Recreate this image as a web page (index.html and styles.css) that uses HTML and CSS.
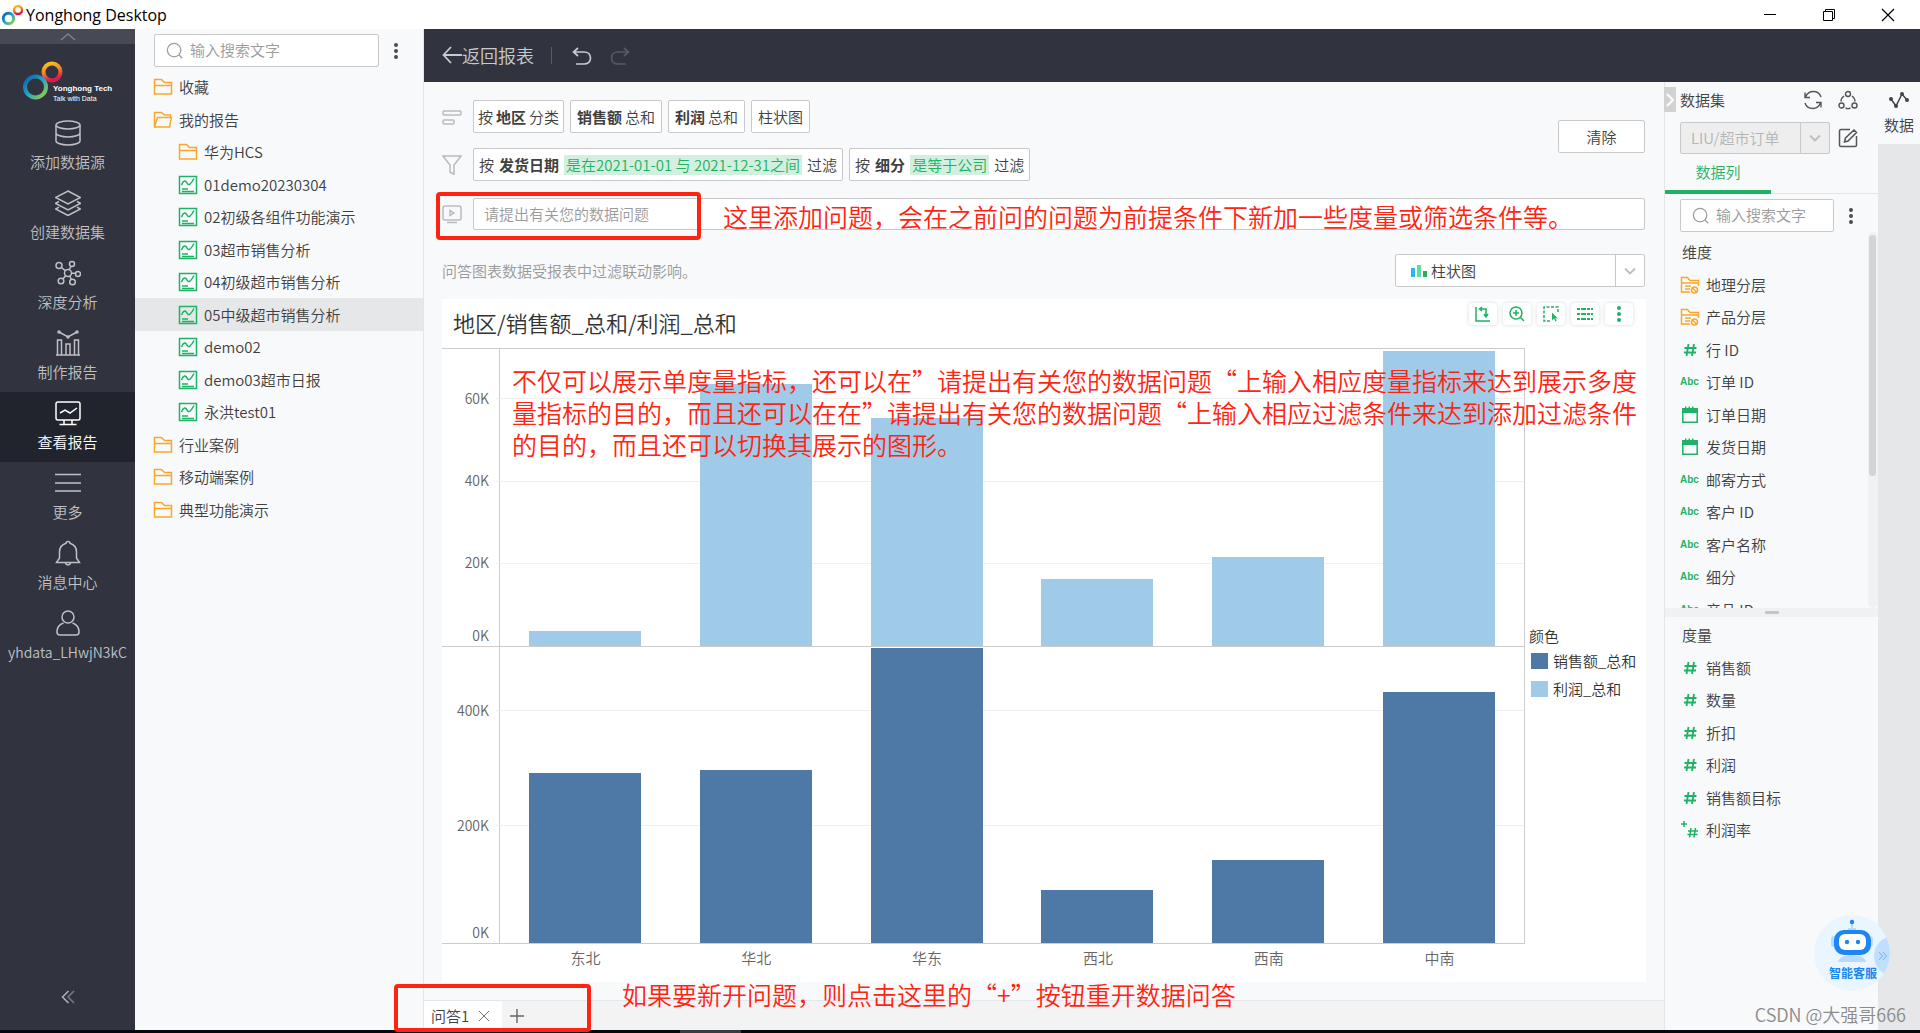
FILE: index.html
```html
<!DOCTYPE html>
<html lang="zh-CN">
<head>
<meta charset="utf-8">
<title>Yonghong Desktop</title>
<link rel="stylesheet" href="styles.css">
</head>
<body>
<svg class="defs" width="0" height="0" aria-hidden="true">
  <defs>
    <linearGradient id="ring-blue" x1="0" y1="0" x2="1" y2="1"><stop offset="0" stop-color="#0b5fae"/><stop offset=".5" stop-color="#23a6c8"/><stop offset="1" stop-color="#a5ce3a"/></linearGradient>
    <linearGradient id="ring-warm" x1="0" y1="0" x2="0.3" y2="1"><stop offset="0" stop-color="#f8c51c"/><stop offset=".5" stop-color="#f18a2a"/><stop offset="1" stop-color="#e3174d"/></linearGradient>
  </defs>
  <symbol id="folder" viewBox="0 0 20 18"><path d="M1.500 16V1.500h7l3 3h7V16z M1.500 7.500h17" fill="none" stroke="#f9a72b" stroke-width="1.500"/></symbol>
  <symbol id="folder-open" viewBox="0 0 20 18"><path d="M1.500 16V1.500h7l3 2.500h6v2.500 M1.500 16l3-9.500h14l-2 9.500z" fill="none" stroke="#f9a72b" stroke-width="1.500"/></symbol>
  <symbol id="report" viewBox="0 0 20 20"><g fill="none" stroke="#1fb264" stroke-width="1.500"><path d="M1.500 1.500h17v17h-17z M4 14h6 M4 16.500h12"/><path d="M3.500 10c2-5 4-5 5.500-2 1.500 3.500 4 1 7-4.500"/></g></symbol>
  <symbol id="search" viewBox="0 0 20 20"><g fill="none" stroke="#9c9c9c" stroke-width="1.400"><circle cx="9" cy="9" r="7.500"/><path d="M14.500 14.500l3.500 3.500"/></g></symbol>
  <symbol id="dots" viewBox="0 0 6 18"><g fill="#4d4d4d"><circle cx="3" cy="3" r="2"/><circle cx="3" cy="9" r="2"/><circle cx="3" cy="15" r="2"/></g></symbol>
  <symbol id="hash" viewBox="0 0 20 20"><path d="M8.500 4L6.500 16 M14 4l-2 12 M4.500 8h12 M4 12.500h12" fill="none" stroke="#1fb264" stroke-width="1.800"/></symbol>
  <symbol id="plus-hash" viewBox="0 0 20 20"><path d="M11 8l-1.500 9.500 M15.500 8l-1.500 9.500 M8 11h10 M7.500 14.500h10 M1 4h6 M4 1v6" fill="none" stroke="#1fb264" stroke-width="1.500"/></symbol>
  <symbol id="calendar" viewBox="0 0 20 20"><path d="M2.800 7v10.200h14.400V7z" fill="none" stroke="#1fb264" stroke-width="1.500"/><path d="M2 3h3V1.500h1.500V3h2V1.500H10V3h2V1.500h1.500V3H18v5H2z" fill="#1fb264"/></symbol>
  <symbol id="level" viewBox="0 0 20 20"><g fill="none" stroke="#f9a72b" stroke-width="1.500"><path d="M10 17H1.500V2.500h6l2.500 3h8.500V11 M1.500 8h17 M5 11h6 M5 14h5"/><circle cx="14.500" cy="15" r="3"/><path d="M12.500 13l4 4"/></g></symbol>
  <symbol id="chevron" viewBox="0 0 12 8"><path d="M1 1.500l5 5 5-5" fill="none" stroke="#bdbdbd" stroke-width="1.800"/></symbol>
</svg>

<header class="titlebar">
  <svg width="22" height="22" viewBox="0 0 22 22"><circle cx="7.500" cy="14.500" r="5.200" fill="none" stroke="url(#ring-blue)" stroke-width="3"/><circle cx="17" cy="6" r="4" fill="none" stroke="url(#ring-warm)" stroke-width="2.400"/></svg>
  <h1 class="app-name">Yonghong Desktop</h1>
  <div class="window-buttons">
    <button aria-label="最小化"><svg width="14" height="14"><path d="M1 6.500h12" stroke="#000"/></svg></button>
    <button aria-label="还原"><svg width="14" height="14" fill="none" stroke="#000"><path d="M1.500 3.500h9v9h-9z M3.500 3V1.500h9v9H11"/></svg></button>
    <button aria-label="关闭"><svg width="14" height="14"><path d="M1 1l12 12M13 1L1 13" stroke="#000" stroke-width="1.200"/></svg></button>
  </div>
</header>

<div class="app">
  <nav class="rail">
    <button class="rail-up" aria-label="向上"><svg width="16" height="8"><path d="M1 7l7-6 7 6" fill="none" stroke="#80828b" stroke-width="1.500"/></svg></button>
    <div class="logo">
      <svg width="42" height="42" viewBox="0 0 42 42"><circle cx="29" cy="11" r="8.500" fill="none" stroke="url(#ring-warm)" stroke-width="4"/><circle cx="12.500" cy="26" r="10.500" fill="none" stroke="url(#ring-blue)" stroke-width="4"/></svg>
      <p class="logo-text"><b>Yonghong Tech</b><span>Talk with Data</span></p>
    </div>
    <a class="rail-item" href="#"><svg class="ri" viewBox="0 0 26 26"><ellipse cx="13" cy="5" rx="12" ry="4"/><path d="M1 5v16c0 2.200 5.400 4 12 4s12-1.800 12-4V5 M1 13c0 2.200 5.400 4 12 4s12-1.800 12-4"/></svg><span>添加数据源</span></a>
    <a class="rail-item" href="#"><svg class="ri" viewBox="0 0 26 26"><path d="M13 1l12.500 6.500L13 14 .5 7.500z M4 11.500L.5 13.300 13 20l12.500-6.700-3.500-1.800 M4 17.200L.5 19 13 25.500 25.500 19 22 17.200"/></svg><span>创建数据集</span></a>
    <a class="rail-item" href="#"><svg class="ri" viewBox="0 0 26 26"><circle cx="13" cy="13" r="3.500"/><circle cx="4" cy="5.500" r="3"/><circle cx="17" cy="4" r="2.500"/><circle cx="23" cy="14" r="2.500"/><circle cx="6" cy="21" r="2.800"/><circle cx="17.500" cy="22" r="2.800"/><path d="M6.300 7.500l4 3.200 M16 6.500l-1.700 3 M16.500 13.300h4 M8 19l2.500-3.200 M16.300 19.500l-1.500-3.500"/></svg><span>深度分析</span></a>
    <a class="rail-item" href="#"><svg class="ri" viewBox="0 0 26 26"><path d="M1 25h24 M2.500 25V10h4v15 M11 25V14h4v11 M19.500 25V10h4v15 M4 2l9 5 9-5"/><circle cx="4" cy="2" r="1"/><circle cx="13" cy="7" r="1"/><circle cx="22" cy="2" r="1"/></svg><span>制作报告</span></a>
    <a class="rail-item active" href="#"><svg class="ri" viewBox="0 0 26 26"><rect x="1" y="2" width="24" height="18" rx="2"/><path d="M5 13l5-3 5 3 7-5 M9 20v4 M17 20v4 M4.500 24.500h17"/></svg><span>查看报告</span></a>
    <a class="rail-item" href="#"><svg class="ri" viewBox="0 0 26 26"><path d="M0 4.500h26 M0 13h26 M0 21h26"/></svg><span>更多</span></a>
    <a class="rail-item" href="#"><svg class="ri" viewBox="0 0 26 26"><path d="M13 1.500c-1.500 0-2 .8-2 1.800C7 4.500 4.500 8 4.500 12v6L1.500 22.500h23L21.500 18v-6c0-4-2.500-7.500-6.500-8.700 0-1-.5-1.800-2-1.800z M10.500 23c.5 2.500 4.500 2.500 5 0"/></svg><span>消息中心</span></a>
    <a class="rail-item user" href="#"><svg class="ri" viewBox="0 0 26 26"><circle cx="13" cy="7" r="6"/><path d="M8.500 13C4 14.500 2 18 2 22c0 2 1 3 3 3h16c2 0 3-1 3-3 0-4-2-7.500-6.500-9"/></svg><span>yhdata_LHwjN3kC</span></a>
    <button class="rail-fold" aria-label="收起"><svg width="14" height="14" fill="none" stroke-width="1.500"><path d="M7.500 1L1.500 7l6 6" stroke="#b4b5ba"/><path d="M13 1L7 7l6 6" stroke="#777a84"/></svg></button>
  </nav>

  <aside class="tree">
    <div class="search-line">
      <label class="search"><svg width="18" height="18"><use href="#search"/></svg><input type="text" placeholder="输入搜索文字" aria-label="搜索报告"></label>
      <button class="more" aria-label="更多选项"><svg width="6" height="18"><use href="#dots"/></svg></button>
    </div>
    <ul class="tree-list">
      <li><svg width="20" height="18"><use href="#folder"/></svg>收藏</li>
      <li><svg width="20" height="18"><use href="#folder-open"/></svg>我的报告</li>
      <li class="sub"><svg width="20" height="18"><use href="#folder"/></svg>华为HCS</li>
      <li class="sub"><svg width="20" height="20"><use href="#report"/></svg>01demo20230304</li>
      <li class="sub"><svg width="20" height="20"><use href="#report"/></svg>02初级各组件功能演示</li>
      <li class="sub"><svg width="20" height="20"><use href="#report"/></svg>03超市销售分析</li>
      <li class="sub"><svg width="20" height="20"><use href="#report"/></svg>04初级超市销售分析</li>
      <li class="sub selected"><svg width="20" height="20"><use href="#report"/></svg>05中级超市销售分析</li>
      <li class="sub"><svg width="20" height="20"><use href="#report"/></svg>demo02</li>
      <li class="sub"><svg width="20" height="20"><use href="#report"/></svg>demo03超市日报</li>
      <li class="sub"><svg width="20" height="20"><use href="#report"/></svg>永洪test01</li>
      <li><svg width="20" height="18"><use href="#folder"/></svg>行业案例</li>
      <li><svg width="20" height="18"><use href="#folder"/></svg>移动端案例</li>
      <li><svg width="20" height="18"><use href="#folder"/></svg>典型功能演示</li>
    </ul>
  </aside>

  <div class="workspace">
    <div class="topbar">
      <a class="back" href="#"><svg width="20" height="18" fill="none" stroke="#c9cacd" stroke-width="1.800"><path d="M9 1L1.500 9 9 17 M1.500 9H20"/></svg>返回报表</a>
      <span class="bar-sep"></span>
      <button aria-label="撤销"><svg width="20" height="18" fill="none" stroke="#c9cacd" stroke-width="1.700"><path d="M6 1L1.500 5 6 9 M1.500 5H12c4 0 6.500 2.500 6.500 6s-2.500 6-6.500 6H4"/></svg></button>
      <button aria-label="重做"><svg width="20" height="18" fill="none" stroke="#565964" stroke-width="1.700"><path d="M14 1l4.500 4L14 9 M18.500 5H8c-4 0-6.500 2.500-6.500 6s2.500 6 6.500 6h8"/></svg></button>
    </div>

    <div class="columns">
      <main class="qa">
        <div class="qa-body">
          <div class="query-head">
            <div class="query-rows">
              <div class="chip-row">
                <svg class="row-icon" width="20" height="20" fill="none" stroke="#b9bbbf" stroke-width="1.500"><rect x="1" y="4" width="18" height="4" rx="1"/><rect x="1" y="13" width="11" height="4" rx="1"/></svg>
                <button class="chip">按<b>地区</b>分类</button><button class="chip measure"><b>销售额</b>总和</button><button class="chip measure"><b>利润</b>总和</button><button class="chip measure">柱状图</button>
              </div>
              <div class="chip-row">
                <svg class="row-icon" width="20" height="20" fill="none" stroke="#b9bbbf" stroke-width="1.500"><path d="M1 1h18l-7 9v9.500L8 17v-7z"/></svg>
                <button class="chip wide">按<b>发货日期</b><mark>是在2021-01-01 与 2021-12-31之间</mark>过滤</button><button class="chip wide">按<b>细分</b><mark>是等于公司</mark>过滤</button>
              </div>
            </div>
            <button class="clear">清除</button>
          </div>
          <div class="ask-row">
            <svg class="row-icon" width="20" height="20" fill="none" stroke="#b9bbbf" stroke-width="1.500"><rect x="1" y="2" width="18" height="14" rx="2"/><path d="M8 6.500v5l4-2.500z M5 18.500h10"/></svg>
            <input class="ask" type="text" placeholder="请提出有关您的数据问题" aria-label="数据问题">
          </div>
          <div class="type-row">
            <p class="hint">问答图表数据受报表中过滤联动影响。</p>
            <label class="type-box"><svg width="16" height="12"><path fill="#25b7f0" d="M0 3h4v9H0z"/><path fill="#63dba0" d="M6 0h4v12H6z"/><path fill="#1fb264" d="M12 6h4v6h-4z"/></svg><select class="type" aria-label="图表类型"><option>柱状图</option></select><span class="drop"><svg width="12" height="8"><use href="#chevron"/></svg></span></label>
          </div>

          <section class="card">
            <div class="card-head">
              <h2 class="chart-title">地区/销售额_总和/利润_总和</h2>
              <div class="tools">
                <button aria-label="交换坐标轴"><svg width="18" height="18"><path d="M2 2v14h14 M6 4h6v7 M8 2L5.500 4 8 6 M10 9l2 3 2-3"/></svg></button>
                <button aria-label="放大"><svg width="18" height="18"><circle cx="8" cy="8" r="6"/><path d="M12.500 12.500L16 16 M8 5v6 M5 8h6"/></svg></button>
                <button aria-label="框选"><svg width="18" height="18"><path stroke-dasharray="3 1.500" d="M8 16H2V2h14v5"/><path d="M10 7.500v8l2-2 1.500 3 1.200-.6-1.400-2.700h2.400z" fill="#1fb264" stroke="none"/></svg></button>
                <button aria-label="图例"><svg width="18" height="18"><path stroke-width="2" stroke-dasharray="3 1 5 1" d="M1 4h16 M1 9h16 M1 14h16"/></svg></button>
                <button aria-label="更多"><svg width="18" height="18"><g fill="#1fb264" stroke="none"><circle cx="9" cy="3" r="2"/><circle cx="9" cy="9" r="2"/><circle cx="9" cy="15" r="2"/></g></svg></button>
              </div>
            </div>
            <div class="chart">
              <div class="plots">
                <div class="plot">
                  <div class="axis"><span style="bottom:83.400%">60K</span><span style="bottom:55.700%">40K</span><span style="bottom:28%">20K</span><span class="zero">0K</span></div>
                  <div class="area">
                    <i style="bottom:83%"></i><i style="bottom:55.300%"></i><i style="bottom:27.600%"></i>
                    <div class="cell"><div class="bar light" style="height:4.900%"></div></div>
                    <div class="cell"><div class="bar light" style="height:88.200%"></div></div>
                    <div class="cell"><div class="bar light" style="height:76.700%"></div></div>
                    <div class="cell"><div class="bar light" style="height:22.500%"></div></div>
                    <div class="cell"><div class="bar light" style="height:30%"></div></div>
                    <div class="cell"><div class="bar light" style="height:99.400%"></div></div>
                  </div>
                </div>
                <div class="plot">
                  <div class="axis"><span style="bottom:78.600%">400K</span><span style="bottom:39.700%">200K</span><span class="zero">0K</span></div>
                  <div class="area">
                    <i style="bottom:78.200%"></i><i style="bottom:39.300%"></i>
                    <div class="cell"><div class="bar" style="height:57.300%"></div></div>
                    <div class="cell"><div class="bar" style="height:58.200%"></div></div>
                    <div class="cell"><div class="bar" style="height:99.400%"></div></div>
                    <div class="cell"><div class="bar" style="height:17.800%"></div></div>
                    <div class="cell"><div class="bar" style="height:28%"></div></div>
                    <div class="cell"><div class="bar" style="height:84.700%"></div></div>
                  </div>
                </div>
                <div class="cats"><span>东北</span><span>华北</span><span>华东</span><span>西北</span><span>西南</span><span>中南</span></div>
              </div>
              <div class="legend">
                <p>颜色</p>
                <p class="key"><span class="swatch"></span>销售额_总和</p>
                <p class="key"><span class="swatch light"></span>利润_总和</p>
              </div>
            </div>
          </section>
        </div>
        <div class="tabs">
          <button class="tab">问答1<svg width="10" height="10"><path d="M0 0l10 10M10 0L0 10" stroke="#777"/></svg></button>
          <button class="tab-add" aria-label="新建问答"><svg width="14" height="14"><path d="M7 0v14M0 7h14" stroke="#666" stroke-width="1.400"/></svg></button>
        </div>
      </main>

      <aside class="data">
        <button class="collapse" aria-label="收起面板"><svg width="8" height="14"><path d="M1 1l6 6-6 6" fill="none" stroke="#fff" stroke-width="2"/></svg></button>
        <div class="data-head">
          <h2>数据集</h2>
          <button aria-label="刷新"><svg width="20" height="20" fill="none" stroke="#555" stroke-width="1.400"><path d="M2.500 7C4 3.500 7 1.500 10.300 1.500c3.500 0 6.500 2 7.700 5.500 M2 2.500V7.500h5 M17.500 13c-1.500 3.500-4.500 5.500-7.800 5.500-3.500 0-6.500-2-7.700-5.500 M18 17.500v-5h-5"/></svg></button>
          <button aria-label="关系"><svg width="20" height="20" fill="none" stroke="#555" stroke-width="1.400"><circle cx="10" cy="4" r="2.500"/><circle cx="3.500" cy="15.500" r="2.500"/><circle cx="16.500" cy="15.500" r="2.500"/><path d="M6 6C4 7.500 3 9 3 11.500 M14 6c2 1.500 3 3 3 5.500 M7.500 18c1.700.8 3.300.8 5 0"/></svg></button>
        </div>
        <div class="set-row">
          <label class="set-box"><select disabled aria-label="数据集"><option>LIU/超市订单</option></select><span class="drop"><svg width="12" height="8"><use href="#chevron"/></svg></span></label>
          <button aria-label="编辑"><svg width="20" height="20" fill="none" stroke="#555" stroke-width="1.500"><path d="M12 1.500H3c-1 0-1.500.5-1.500 1.500v14c0 1 .5 1.500 1.500 1.500h14c1 0 1.500-.5 1.500-1.500V8 M6.500 14l1-4 8.500-8 2.500 2.500-8.500 8.500z"/></svg></button>
        </div>
        <div class="data-tabs"><button>数据列</button></div>
        <div class="search-line slim">
          <label class="search"><svg width="18" height="18"><use href="#search"/></svg><input type="text" placeholder="输入搜索文字" aria-label="搜索字段"></label>
          <button class="more" aria-label="更多选项"><svg width="6" height="18"><use href="#dots"/></svg></button>
        </div>
        <div class="dims">
          <ul class="fields">
            <li class="group">维度</li>
            <li><svg width="20" height="20"><use href="#level"/></svg>地理分层</li>
            <li><svg width="20" height="20"><use href="#level"/></svg>产品分层</li>
            <li><svg width="20" height="20"><use href="#hash"/></svg>行 ID</li>
            <li><b class="abc">Abc</b>订单 ID</li>
            <li><svg width="20" height="20"><use href="#calendar"/></svg>订单日期</li>
            <li><svg width="20" height="20"><use href="#calendar"/></svg>发货日期</li>
            <li><b class="abc">Abc</b>邮寄方式</li>
            <li><b class="abc">Abc</b>客户 ID</li>
            <li><b class="abc">Abc</b>客户名称</li>
            <li><b class="abc">Abc</b>细分</li>
            <li><b class="abc">Abc</b>产品 ID</li>
          </ul>
          <div class="track"><div class="thumb"></div></div>
        </div>
        <div class="splitter"><span></span></div>
        <ul class="fields">
          <li class="group">度量</li>
          <li><svg width="20" height="20"><use href="#hash"/></svg>销售额</li>
          <li><svg width="20" height="20"><use href="#hash"/></svg>数量</li>
          <li><svg width="20" height="20"><use href="#hash"/></svg>折扣</li>
          <li><svg width="20" height="20"><use href="#hash"/></svg>利润</li>
          <li><svg width="20" height="20"><use href="#hash"/></svg>销售额目标</li>
          <li><svg width="20" height="20"><use href="#plus-hash"/></svg>利润率</li>
        </ul>
      </aside>

      <div class="strip">
        <button class="strip-tab"><svg width="20" height="18"><path d="M2 8l5 7 6-12 5 6" fill="none" stroke="#444" stroke-width="1.500"/><g fill="#444"><circle cx="2" cy="8" r="2"/><circle cx="7" cy="15" r="2"/><circle cx="13" cy="3" r="2"/><circle cx="18" cy="9" r="2"/></g></svg>数据</button>
      </div>
    </div>
  </div>
</div>
<footer class="taskbar"><span></span></footer>

<button class="robot" aria-label="智能客服">
  <svg width="76" height="76" viewBox="0 0 76 76"><defs><clipPath id="round"><circle cx="38" cy="38" r="38"/></clipPath></defs><circle cx="38" cy="38" r="38" fill="#e9f5ff"/><circle cx="80" cy="41" r="20" fill="#c0dfff" clip-path="url(#round)"/><path d="M65 37l3.500 4-3.500 4 M69 37l3.500 4-3.500 4" fill="none" stroke="#6cb2fa"/><path d="M24 47c1-4 5-7 14-7s13 3 14 7z" fill="#b9dafc"/><path d="M38 7v7 M34 14h8" stroke="#b9dafc" stroke-width="2"/><circle cx="38" cy="7" r="2.200" fill="#1c86f2"/><rect x="17" y="21" width="42" height="11" rx="3" fill="#b9dafc"/><rect x="20" y="15" width="37" height="25" rx="10" fill="#1c86f2"/><rect x="25" y="19" width="27" height="16" rx="6" fill="#fff"/><circle cx="33" cy="27" r="2.200" fill="#1c86f2"/><circle cx="44" cy="27" r="2.200" fill="#1c86f2"/></svg>
  <span>智能客服</span>
</button>
<p class="watermark">CSDN @大强哥666</p>

<div class="frame frame-ask"></div>
<div class="frame frame-tabs"></div>
<p class="note note-ask">这里添加问题，会在之前问的问题为前提条件下新加一些度量或筛选条件等。</p>
<p class="note note-chart">不仅可以展示单度量指标，还可以在”请提出有关您的数据问题“上输入相应度量指标来达到展示多度<br>量指标的目的，而且还可以在在”请提出有关您的数据问题“上输入相应过滤条件来达到添加过滤条件<br>的目的，而且还可以切换其展示的图形。</p>
<p class="note note-tabs">如果要新开问题，则点击这里的“+”按钮重开数据问答</p>
</body>
</html>
```

FILE: styles.css
```css
* { box-sizing: border-box; }
body, h1, h2, p, ul { margin: 0; padding: 0; }
ul { list-style: none; }
body {
  display: flex;
  flex-direction: column;
  min-height: 100vh;
  position: relative;
  overflow-x: hidden;
  background: #f8f9fb;
  color: #404040;
  font: 350 15px/20px "Noto Sans CJK SC", sans-serif;
}
button, input, select { font: inherit; color: inherit; }
button { border: 0; padding: 0; background: none; display: flex; align-items: center; justify-content: center; }
a { color: inherit; text-decoration: none; }
svg { flex: none; display: block; }
.defs { position: absolute; }

.titlebar { height: 29px; background: #fff; display: flex; align-items: center; color: #000; }
.titlebar > svg { margin: 0 3px 0 1px; }
.app-name { font: 400 16px/24px "Open Sans", sans-serif; }
.window-buttons { margin-left: auto; display: flex; gap: 45px; padding-right: 25px; }

.app { flex: 1; display: flex; }

.rail { width: 135px; background: #31343f; color: #bfc0c4; display: flex; flex-direction: column; }
.rail-up { height: 15px; background: #474a54; }
.logo { display: flex; height: 68px; padding: 17px 0 0 23px; color: #fff; }
.logo-text { font: 7px/10px "Liberation Sans", sans-serif; margin: 23px 0 0 -12px; white-space: nowrap; display: flex; flex-direction: column; }
.logo-text b { font-size: 8px; }
.rail-item { height: 70px; padding-top: 8px; display: flex; flex-direction: column; align-items: center; gap: 6px; white-space: nowrap; }
.rail-item.active { background: #22242d; color: #fff; }
.rail-item.user { font-size: 14px; }
.ri { width: 26px; height: 26px; fill: none; stroke: currentColor; stroke-width: 1.5; }
.rail-fold { margin: auto auto 26px; }

.tree { width: 289px; border-right: 1px solid #e3e5e9; padding-top: 5px; }
.search-line { display: flex; align-items: center; padding-left: 19px; gap: 14px; }
.search { display: flex; align-items: center; gap: 6px; width: 225px; height: 33px; padding-left: 11px; background: #fff; border: 1px solid #c9c9c9; border-radius: 2px; }
.search input { flex: 1; min-width: 0; border: 0; padding: 0 0 1px; background: none; }
input { outline: 0; }
input::placeholder { color: #9a9a9a; opacity: 1; }
.tree-list { display: grid; grid-auto-rows: 32px 33px; padding-top: 4px; }
.tree-list li { display: flex; align-items: center; gap: 6px; padding-left: 18px; }
.tree-list .sub { padding-left: 43px; }
.tree-list .selected { background: #e6e7e9; }

.workspace { flex: 1; min-width: 0; display: flex; flex-direction: column; }
.topbar { height: 53px; background: #31343f; display: flex; align-items: center; padding-left: 18px; }
.back { display: flex; align-items: center; color: #c9cacd; font-size: 18px; line-height: 24px; padding-bottom: 1px; }
.bar-sep { width: 1px; height: 17px; background: #595c66; margin: 0 20px 0 17px; }
.topbar button { margin-right: 18px; }

.columns { flex: 1; display: flex; }
.qa { flex: 1; min-width: 0; display: flex; flex-direction: column; }
.qa-body { flex: 1; padding: 18px; display: flex; flex-direction: column; }
.query-head { display: flex; align-items: flex-start; justify-content: space-between; }
.query-rows { display: grid; gap: 15px; }
.chip-row { display: flex; align-items: center; gap: 6px; }
.row-icon { margin-right: 5px; }
.chip { height: 33px; padding: 0 4px; gap: 3px; border: 1px solid #c9c9c9; border-radius: 2px; background: #fff; white-space: nowrap; }
.measure { padding: 0 6px; }
.wide { padding: 0 5px; gap: 5px; }
b { font-weight: 700; }
mark { background: #d2efdf; color: #1fb264; line-height: 20px; padding: 0 2px; }
.clear { width: 87px; height: 33px; margin-top: 20px; border: 1px solid #c9c9c9; border-radius: 2px; background: #fff; }
.ask-row { display: flex; align-items: center; gap: 6px; margin-top: 17px; }
.ask { flex: 1; height: 32px; border: 1px solid #c9c9c9; border-radius: 2px; background: #fff; padding: 0 10px 1px; }
.query-head, .ask-row, .type-row { margin-right: 1px; }
.type-row { display: flex; align-items: center; justify-content: space-between; margin-top: 24px; }
.hint { color: #999; }
.type-box { width: 250px; height: 33px; border: 1px solid #c9c9c9; border-radius: 2px; background: #fff; display: flex; align-items: center; padding-left: 15px; gap: 4px; }
select { appearance: none; border: 0; padding: 0; background: none; flex: 1; min-width: 0; opacity: 1; }
.drop { width: 29px; align-self: stretch; display: flex; align-items: center; justify-content: center; border-left: 1px solid #c9c9c9; }

.card { flex: 1; margin-top: 12px; background: #fff; display: flex; flex-direction: column; }
.card-head { height: 49px; display: flex; justify-content: space-between; align-items: center; padding: 0 13px 4px 11px; }
.chart-title { font-size: 22px; font-weight: 350; line-height: 30px; color: #333; }
.tools { display: flex; gap: 6px; align-self: flex-start; padding-top: 4px; }
.tools button { width: 28px; height: 22px; border-radius: 4px; box-shadow: 0 0 4px #d5dae0; background: #fff; }
.tools svg { fill: none; stroke: #1fb264; stroke-width: 1.5; }
.chart { flex: 1; display: flex; padding-bottom: 12px; }
.plots { flex: 1; min-width: 0; display: flex; flex-direction: column; }
.plot { flex: 1; display: flex; border-top: 1px solid #ccc; }
.plot + .plot { border-bottom: 1px solid #ccc; }
.axis { width: 57px; position: relative; color: #666; font-size: 14px; }
.axis span { position: absolute; right: 10px; transform: translateY(50%); }
.axis .zero { bottom: 1px; transform: none; }
.area { flex: 1; display: flex; align-items: stretch; position: relative; border: solid #ccc; border-width: 0 1px; }
.area i { position: absolute; left: -4px; right: 0; height: 1px; background: #f0f0f0; }
.cell { flex: 1; display: flex; align-items: flex-end; justify-content: center; position: relative; }
.bar { width: 112px; max-width: 80%; background: #4e79a7; }
.light { background: #a0cbe8; }
.cats { display: flex; height: 26px; padding: 4px 0 0 58px; text-align: center; color: #666; }
.cats span { flex: 1; }
.legend { width: 121px; padding: 278px 0 0 4px; color: #333; }
.key { display: flex; align-items: center; gap: 5px; height: 28px; padding-left: 2px; }
.swatch { width: 17px; height: 16px; background: #4e79a7; }
.swatch.light { background: #a0cbe8; }
.legend p:first-child { padding-bottom: 1px; }

.tabs { height: 30px; display: flex; background: #f3f3f3; border-top: 1px solid #e3e8ef; }
.tab { width: 78px; gap: 10px; padding-left: 7px; justify-content: flex-start; background: #fff; }
.tab-add { width: 30px; }

.data { width: 214px; border-left: 1px solid #e3e5e9; position: relative; display: flex; flex-direction: column; }
.collapse { position: absolute; left: -1px; top: 5px; width: 12px; height: 25px; background: #d2d2d2; }
.data-head { display: flex; align-items: center; height: 20px; margin: 8px 20px 0 15px; gap: 15px; }
.data-head h2 { flex: 1; font-size: 15px; font-weight: 350; line-height: 20px; }
.set-row { display: flex; align-items: center; gap: 8px; margin: 12px 0 0 15px; }
.set-box { width: 150px; height: 32px; display: flex; border: 1px solid #c9c9c9; border-radius: 2px; background: #eee; padding-left: 10px; color: #b5b5b5; }
.data-tabs { height: 40px; border-bottom: 1px solid #e3e5e9; display: flex; }
.data-tabs button { width: 106px; height: 40px; color: #1fb264; border-bottom: 4px solid #1fb264; }
.slim { padding-left: 15px; padding-top: 5px; }
.slim .search { width: 154px; }
.dims { display: flex; height: 376px; overflow: hidden; }
.dims .fields { flex: 1; padding-top: 4px; }
.fields { display: grid; grid-auto-rows: 32px 33px; align-content: start; }
.fields li { display: flex; align-items: center; gap: 6px; padding-left: 15px; }
.fields .group { padding-left: 17px; }
.abc { width: 20px; font: 700 10px/12px "Liberation Sans", sans-serif; color: #1fb264; }
.track { width: 10px; background: #f0f1f3; border-radius: 5px; padding: 3px 2px 0 1px; }
.thumb { height: 241px; background: #d4d4d4; border-radius: 4px; }
.splitter { height: 9px; background: #f0f1f3; display: flex; align-items: center; justify-content: center; margin-bottom: 2px; }
.splitter span { width: 14px; height: 3px; background: #c4c4c4; border-radius: 1px; }

.strip { width: 42px; background: #e6e7e9; }
.strip-tab { width: 42px; height: 62px; background: #f8f9fb; flex-direction: column; gap: 6px; }

.taskbar { height: 3px; background: #05070f; padding-left: 680px; }
.taskbar span { display: block; width: 61px; height: 3px; background: #3a3c43; }

.robot { position: absolute; right: 30px; bottom: 42px; width: 76px; height: 76px; }
.robot span { position: absolute; left: 2px; right: 0; bottom: 10px; font-size: 12px; line-height: 16px; font-weight: 700; color: #1c86f2; }
.watermark { position: absolute; right: 14px; bottom: 7px; font-size: 18px; line-height: 24px; color: #8b8b8b; }
.frame { position: absolute; border: 4px solid #ff2412; border-radius: 4px; pointer-events: none; }
.frame-ask { left: 436px; top: 192px; width: 265px; height: 48px; }
.frame-tabs { left: 394px; top: 984px; width: 197px; height: 48px; }
.note { position: absolute; color: #ff2412; font-size: 25px; line-height: 32px; white-space: nowrap; pointer-events: none; }
.note-ask { left: 723px; top: 200px; }
.note-chart { left: 512px; top: 364px; }
.note-tabs { left: 622px; top: 978px; }
```
